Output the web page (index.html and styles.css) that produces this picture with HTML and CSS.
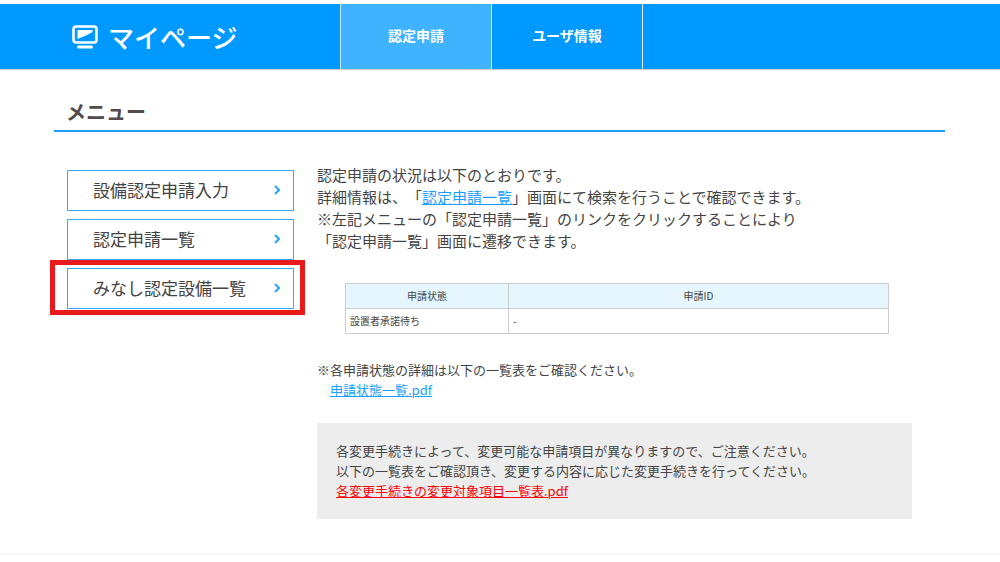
FILE: index.html
```html
<!DOCTYPE html>
<html lang="ja">
<head>
<meta charset="utf-8">
<meta name="viewport" content="width=device-width, initial-scale=1">
<title>マイページ</title>
<link rel="stylesheet" href="styles.css">
</head>
<body>
<header class="header">
  <div class="brand">
    <svg class="brand-icon" viewBox="0 0 26 24" aria-hidden="true">
      <rect x="1.5" y="1.5" width="23" height="16" rx="2.5" fill="none" stroke="#fff" stroke-width="2.6"/>
      <path d="M5.5 5H20.5V7L14 10.5L5.5 14Z" fill="#fff"/>
      <rect x="5" y="20.5" width="16" height="3" rx="1.5" fill="#fff"/>
    </svg>
    <span class="brand-name">マイページ</span>
  </div>
  <nav class="nav">
    <a class="nav-link nav-current" href="#">認定申請</a>
    <a class="nav-link" href="#">ユーザ情報</a>
  </nav>
</header>
<main class="page">
  <h1 class="page-title">メニュー</h1>
  <div class="columns">
    <nav class="menu">
      <a class="menu-link" href="#">設備認定申請入力<svg class="chevron" viewBox="0 0 6 10" aria-hidden="true"><path d="M1 1L5 5L1 9"/></svg></a>
      <a class="menu-link" href="#">認定申請一覧<svg class="chevron" viewBox="0 0 6 10" aria-hidden="true"><path d="M1 1L5 5L1 9"/></svg></a>
      <a class="menu-link menu-marked" href="#">みなし認定設備一覧<svg class="chevron" viewBox="0 0 6 10" aria-hidden="true"><path d="M1 1L5 5L1 9"/></svg></a>
    </nav>
    <section class="content">
      <p class="lead">認定申請の状況は以下のとおりです。<br>詳細情報は、「<a class="link" href="#">認定申請一覧</a>」画面にて検索を行うことで確認できます。<br>※左記メニューの「認定申請一覧」のリンクをクリックすることにより<br>「認定申請一覧」画面に遷移できます。</p>
      <table class="status">
        <thead><tr><th class="status-name">申請状態</th><th>申請ID</th></tr></thead>
        <tbody><tr><td>設置者承諾待ち</td><td>-</td></tr></tbody>
      </table>
      <p class="note">※各申請状態の詳細は以下の一覧表をご確認ください。<br><a class="link note-link" href="#">申請状態一覧.pdf</a></p>
      <p class="notice">各変更手続きによって、変更可能な申請項目が異なりますので、ご注意ください。<br>以下の一覧表をご確認頂き、変更する内容に応じた変更手続きを行ってください。<br><a class="link link-alert" href="#">各変更手続きの変更対象項目一覧表.pdf</a></p>
    </section>
  </div>
</main>
<footer class="footer"></footer>
</body>
</html>
```
FILE: styles.css
```css
* { box-sizing: border-box; }

body {
  margin: 0;
  padding-top: 4px;
  background: #fff;
  color: #444;
  font-family: "Noto Sans CJK JP", sans-serif;
  font-weight: 400;
  text-spacing-trim: space-all;
}

p, h1 { margin: 0; }

.header {
  display: flex;
  min-height: 66px;
  background: #0099ff;
  border-bottom: 1px solid #ccc;
}

.brand {
  display: flex;
  align-items: center;
  gap: 10px;
  width: 34%;
  padding-left: 72px;
  color: #fff;
}

.brand-icon { width: 26px; height: 24px; }
.brand-name { font-size: 26px; line-height: 32px; font-weight: 500; }

.nav {
  display: flex;
  border-left: 1px solid #c8e8ff;
}

.nav-link {
  display: flex;
  align-items: center;
  justify-content: center;
  width: 151px;
  padding-bottom: 4px;
  border-right: 1px solid #e0f3ff;
  color: #fff;
  font-size: 14px;
  line-height: 20px;
  font-weight: 700;
  text-decoration: none;
}

.nav-current { background: #40b3ff; }

.page { padding: 28px 55px 34px 54px; }

.page-title {
  padding: 0 12px 4px;
  border-bottom: 2px solid #1a9fff;
  color: #554a4a;
  font-size: 20px;
  line-height: 28px;
  font-weight: 700;
}

.columns {
  display: flex;
  align-items: flex-start;
  gap: 23px;
  padding: 32px 33px 0 13px;
}

.menu {
  display: flex;
  flex-direction: column;
  flex: none;
  gap: 8px;
  width: 227px;
  padding-top: 6px;
}

.menu-link {
  display: flex;
  align-items: center;
  justify-content: space-between;
  position: relative;
  padding: 7px 13px 8px 25px;
  border: 1px solid #33aaff;
  color: #444;
  font-size: 17px;
  line-height: 24px;
  text-decoration: none;
}

.menu-marked::after {
  content: "";
  position: absolute;
  inset: -9px -12px -7px -18px;
  border: 5px solid #e81a1c;
}

.chevron {
  width: 6px;
  height: 10px;
  fill: none;
  stroke: #22a4ff;
  stroke-width: 2;
}

.content { flex: 1; min-width: 0; }
.lead { font-size: 15px; line-height: 22px; }

.link { color: #1a9fff; text-decoration: underline; }
.link-alert { color: #ff0000; }

.status {
  width: calc(100% - 51px);
  margin: 31px 23px 26px 28px;
  border-collapse: collapse;
  table-layout: fixed;
  font-size: 10px;
  line-height: 16px;
}

.status th, .status td {
  padding: 4px;
  border: 1px solid #ccc;
  font-weight: 400;
  text-align: left;
}

.status th { background: #e5f6ff; text-align: center; }
.status .status-name { width: 30%; }

.note { font-size: 13px; line-height: 20px; }
.note-link { margin-left: 13px; }

.notice {
  margin-top: 23px;
  padding: 18px 19px;
  background: #ededed;
  font-size: 13px;
  line-height: 20px;
}

.footer { border-top: 2px solid #f5f5f5; }
```
